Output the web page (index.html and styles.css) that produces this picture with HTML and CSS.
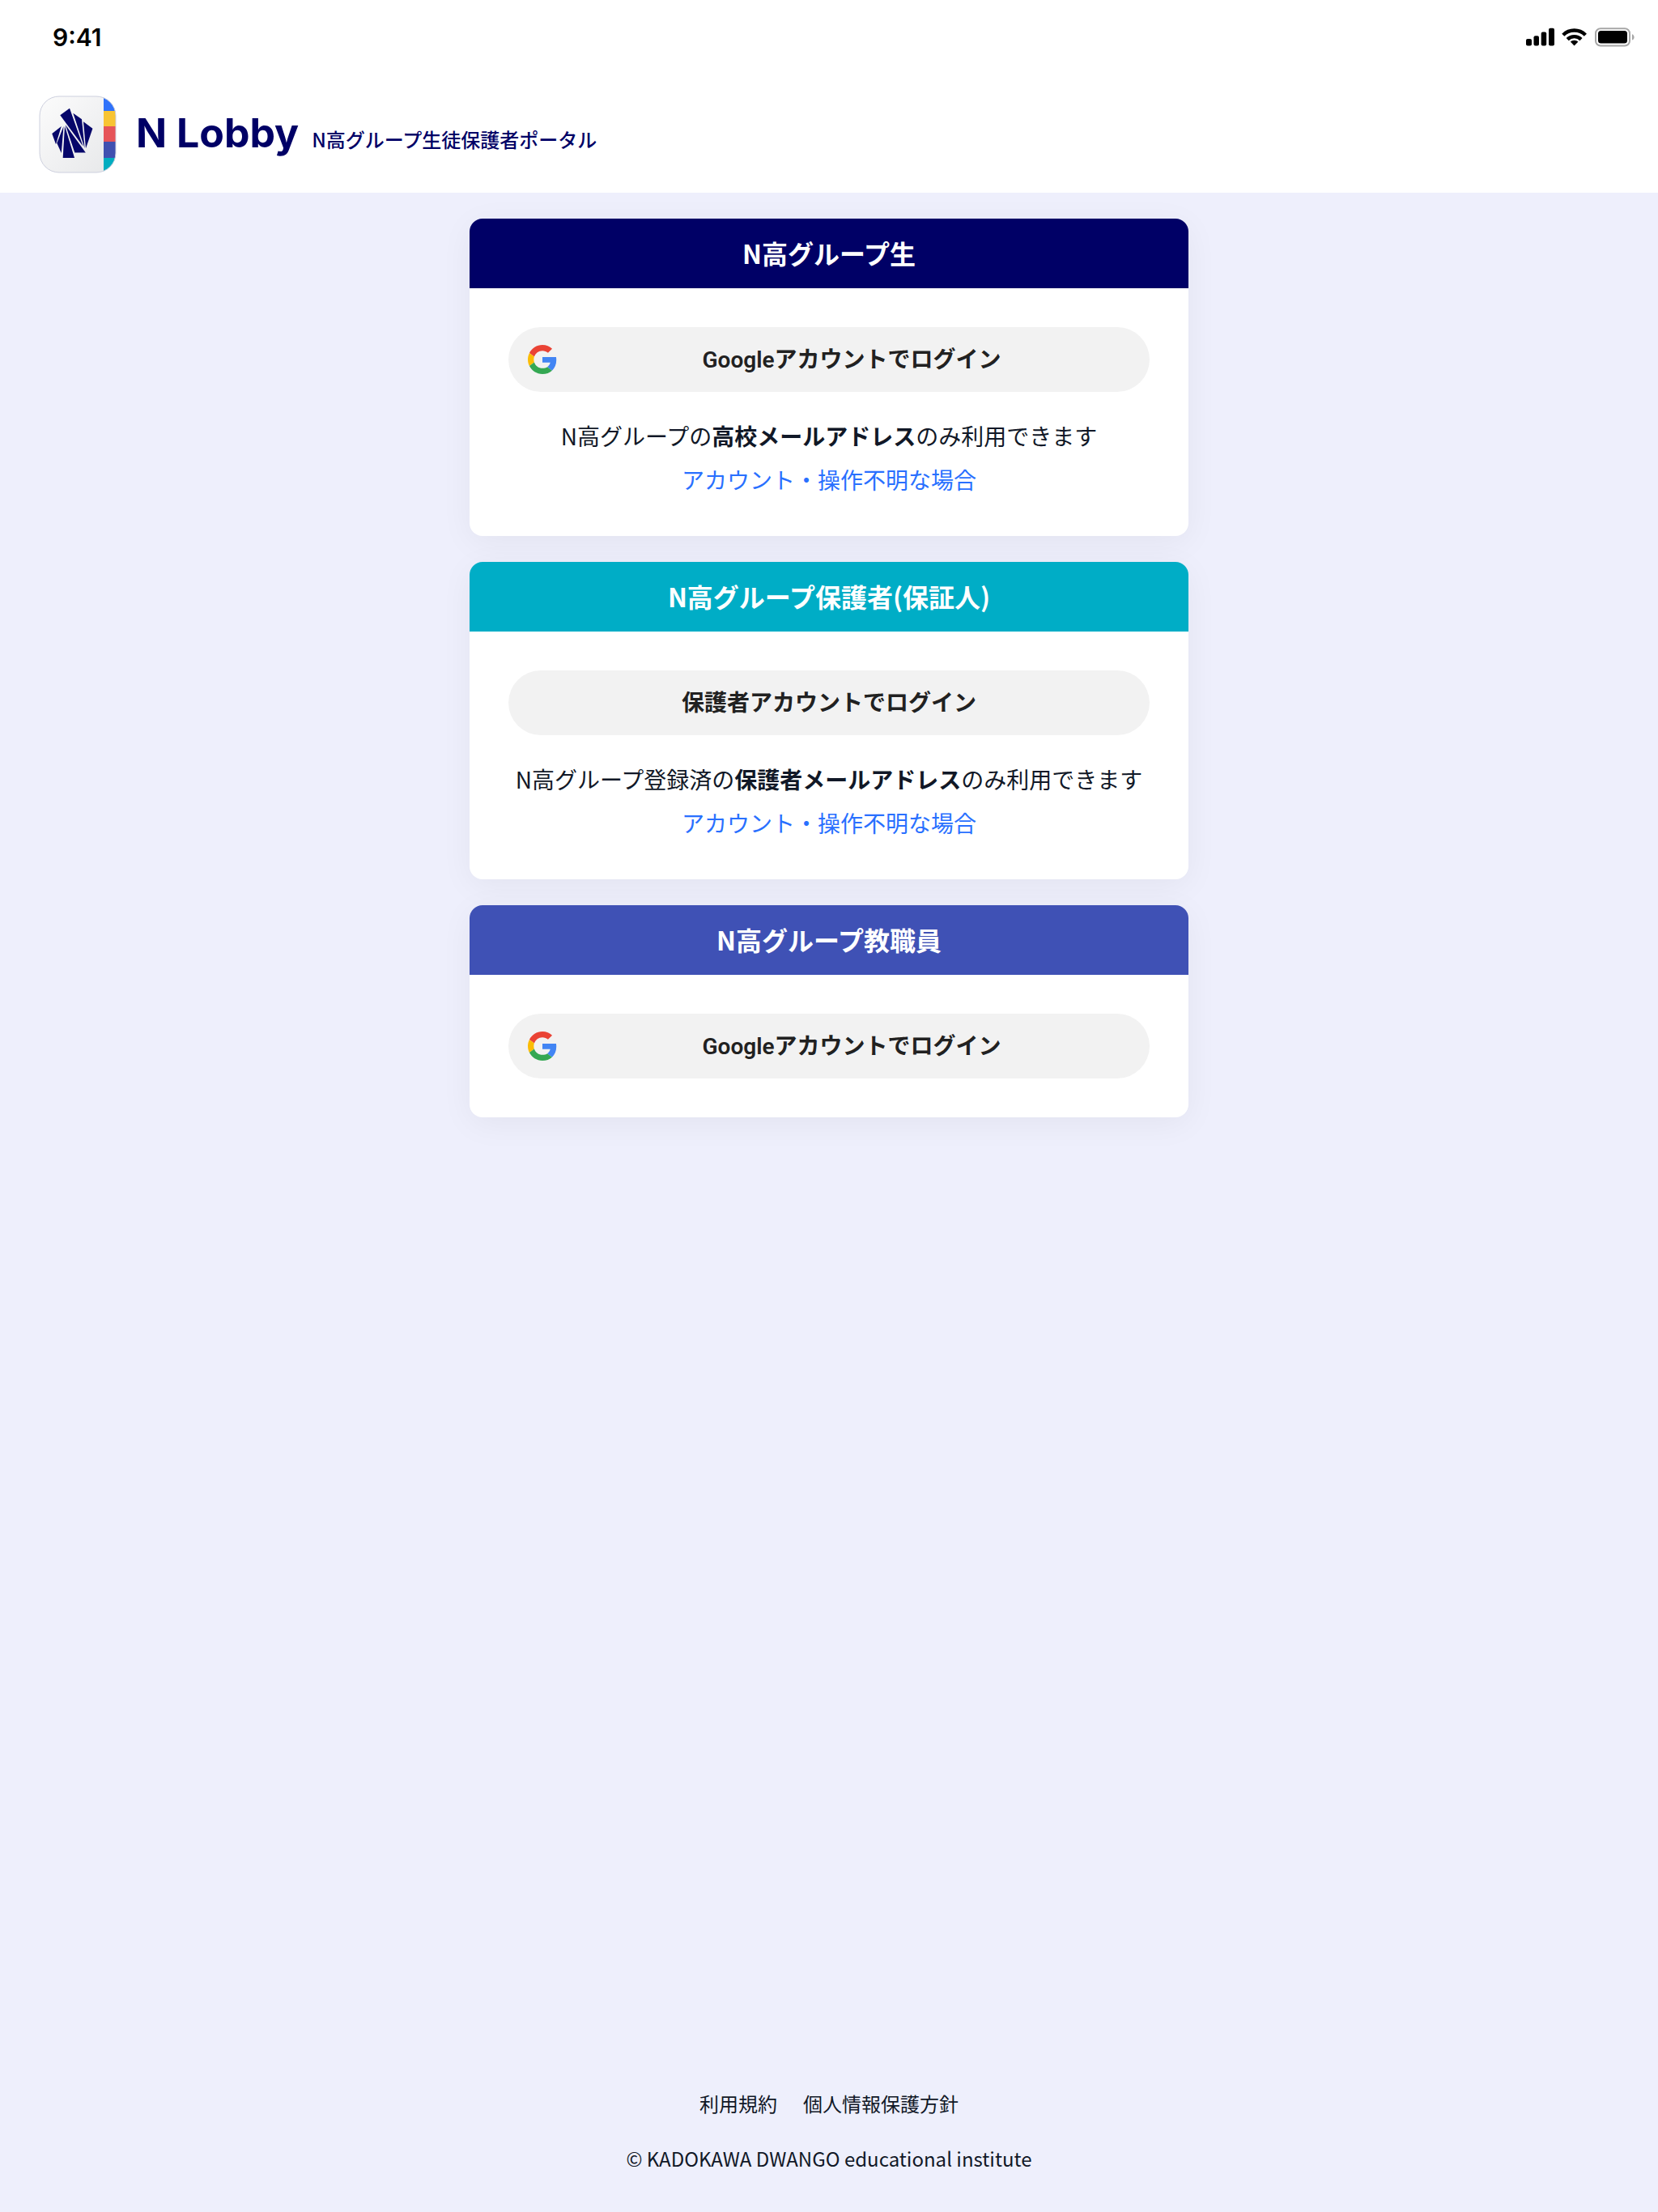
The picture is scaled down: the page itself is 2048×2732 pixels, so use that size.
FILE: index.html
```html
<!DOCTYPE html>
<html lang="ja">
  <head>
    <meta charset="UTF-8" />
    <meta name="viewport" content="width=device-width, initial-scale=1.0" />
    <title>N Lobby</title>
    <link rel="stylesheet" href="styles.css">
  </head>
  <body>
    <!-- Google ロゴ -->
    <svg class="defs" aria-hidden="true">
      <symbol id="google" viewBox="0 0 48 48">
        <path fill="#EA4335" d="M24 9.5c3.54 0 6.71 1.22 9.21 3.6l6.85-6.85C35.9 2.38 30.47 0 24 0 14.62 0 6.51 5.38 2.56 13.22l7.98 6.19C12.43 13.72 17.74 9.5 24 9.5z"/>
        <path fill="#4285F4" d="M46.98 24.55c0-1.57-.15-3.09-.38-4.55H24v9.02h12.94c-.58 2.96-2.26 5.48-4.78 7.18l7.73 6c4.51-4.18 7.09-10.36 7.09-17.65z"/>
        <path fill="#FBBC05" d="M10.53 28.59c-.48-1.45-.76-2.99-.76-4.59s.27-3.14.76-4.59l-7.98-6.19C.92 16.46 0 20.12 0 24c0 3.88.92 7.54 2.56 10.78l7.97-6.19z"/>
        <path fill="#34A853" d="M24 48c6.48 0 11.93-2.13 15.89-5.81l-7.73-6c-2.15 1.45-4.92 2.3-8.16 2.3-6.26 0-11.57-4.22-13.47-9.91l-7.98 6.19C6.51 42.62 14.62 48 24 48z"/>
      </symbol>
    </svg>

    <div class="status-bar">
      <span class="time">9:41</span>
      <svg class="status-icons" viewBox="0 0 136 26" aria-hidden="true">
        <rect x="0" y="16" width="7" height="8.5" rx="2"/>
        <rect x="9.5" y="12.3" width="6.5" height="12.2" rx="2"/>
        <rect x="18.7" y="7.5" width="6.5" height="17" rx="2"/>
        <rect x="28" y="2.7" width="7" height="21.8" rx="2"/>
        <g fill="none" stroke="#000" stroke-width="4.4">
          <path d="M45.8 11.2a19.5 19.5 0 0 1 27.6 0"/>
          <path d="M51.2 16.6a11.9 11.9 0 0 1 16.8 0"/>
        </g>
        <path d="M54.8 19.6a7 7 0 0 1 9.6 0l-4.8 5z"/>
        <rect x="86" y="3.2" width="42" height="21.3" rx="6" fill="none" stroke="#a6a6a6" stroke-width="2"/>
        <rect x="89" y="6" width="36" height="15.5" rx="3.5"/>
        <path d="M131 10.2c3.4 1 3.4 6.4 0 7.4z" fill="#a6a6a6"/>
      </svg>
    </div>

    <header class="header">
      <svg class="app-icon" viewBox="0 0 96 96" aria-hidden="true">
        <defs>
          <linearGradient id="face" x1="0" y1="0" x2="1" y2="1">
            <stop offset="0" stop-color="#fcfcfc"/>
            <stop offset="1" stop-color="#e6e7e9"/>
          </linearGradient>
          <clipPath id="round"><rect x="1" y="1" width="94" height="94" rx="24"/></clipPath>
        </defs>
        <g clip-path="url(#round)">
          <rect width="96" height="96" fill="url(#face)"/>
          <rect x="80" y="0" width="16" height="20" fill="#2f72fa"/>
          <rect x="80" y="19" width="16" height="20" fill="#f8c433"/>
          <rect x="80" y="38" width="16" height="20" fill="#e65459"/>
          <rect x="80" y="57" width="16" height="20" fill="#4050b0"/>
          <rect x="80" y="77" width="16" height="19" fill="#00adc0"/>
        </g>
        <rect x="1" y="1" width="94" height="94" rx="24" fill="none" stroke="#cdd0de"/>
        <g fill="#06066a">
          <path d="M26.3 24.3 38 15.8 54.6 62.8z"/>
          <path d="M42.3 21.7 53 29.3 56.6 65z"/>
          <path d="M55 32.3 66.4 40.7 58 65.3z"/>
          <path d="M16.3 47 27.8 38 21 60.3z"/>
          <path d="M30.5 38 22.3 58.7 27.8 71z"/>
          <path d="M32 37.5 29.7 77H44z"/>
          <path d="M32.8 36 44.3 70.4H57.8z"/>
        </g>
      </svg>
      <h1 class="brand">
        <span class="brand-name">N Lobby</span>
        <span class="brand-sub">N高グループ生徒保護者ポータル</span>
      </h1>
    </header>

    <main class="main">
      <section class="card">
        <h2 class="card-title student">N高グループ生</h2>
        <div class="card-body">
          <button type="button" class="login">
            <svg class="google"><use href="#google"/></svg>
            <span>Googleアカウントでログイン</span>
          </button>
          <p class="note">N高グループの<b>高校メールアドレス</b>のみ利用できます</p>
          <a class="help" href="#">アカウント・操作不明な場合</a>
        </div>
      </section>

      <section class="card">
        <h2 class="card-title parent">N高グループ保護者(保証人)</h2>
        <div class="card-body">
          <button type="button" class="login">
            <span>保護者アカウントでログイン</span>
          </button>
          <p class="note">N高グループ登録済の<b>保護者メールアドレス</b>のみ利用できます</p>
          <a class="help" href="#">アカウント・操作不明な場合</a>
        </div>
      </section>

      <section class="card">
        <h2 class="card-title staff">N高グループ教職員</h2>
        <div class="card-body">
          <button type="button" class="login">
            <svg class="google"><use href="#google"/></svg>
            <span>Googleアカウントでログイン</span>
          </button>
        </div>
      </section>
    </main>

    <footer class="footer">
      <nav class="footer-links">
        <a href="#">利用規約</a>
        <a href="#">個人情報保護方針</a>
      </nav>
      <small class="copyright">© KADOKAWA DWANGO educational institute</small>
    </footer>
  </body>
</html>
```

FILE: styles.css
```css
* {
  box-sizing: border-box;
}

body {
  margin: 0;
  min-height: 100vh;
  display: flex;
  flex-direction: column;
  background-color: #eeeffc;
  color: #111827;
  font-family: "Noto Sans CJK JP", sans-serif;
  font-size: 28px;
  line-height: 40px;
}

h1,
h2,
p {
  margin: 0;
}

a {
  color: inherit;
  text-decoration: none;
}

.defs {
  position: absolute;
  width: 0;
  height: 0;
}

/* ステータスバー */
.status-bar {
  display: flex;
  justify-content: space-between;
  align-items: flex-start;
  height: 94px;
  padding: 32px 27px 0 65px;
  background-color: #fff;
}

.time {
  color: #000;
  font-family: Inter, sans-serif;
  font-size: 30px;
  font-weight: 600;
  line-height: 28px;
}

.status-icons {
  width: 136px;
  height: 26px;
}

/* ヘッダー */
.header {
  display: flex;
  align-items: center;
  gap: 24px;
  padding: 24px 48px;
  background-color: #fff;
}

.app-icon {
  width: 96px;
  height: 96px;
}

.brand {
  display: flex;
  align-items: baseline;
  gap: 16px;
  padding-top: 4px;
  color: #006;
}

.brand-name {
  font-family: Inter, sans-serif;
  font-size: 50px;
  font-weight: 700;
}

.brand-sub {
  font-size: 24px;
  font-weight: 500;
}

/* ログインカード */
.main {
  flex: 1;
  display: flex;
  flex-direction: column;
  gap: 32px;
  width: 100%;
  max-width: 888px;
  margin: 0 auto;
  padding: 32px 0;
}

.card {
  overflow: hidden;
  border-radius: 16px;
  background-color: #fff;
  box-shadow: 0 8px 40px rgba(0, 0, 0, 0.05);
}

.card-title {
  padding: 18px 48px 20px;
  color: #fff;
  font-size: 32px;
  font-weight: 700;
  line-height: 48px;
  text-align: center;
}

.student {
  background-color: #006;
}

.parent {
  background-color: #00adc6;
}

.staff {
  background-color: #3f51b5;
}

.card-body {
  padding: 48px;
  text-align: center;
}

.login {
  display: flex;
  align-items: center;
  gap: 20px;
  width: 100%;
  height: 80px;
  padding: 0 24px;
  border: none;
  border-radius: 40px;
  background-color: #f2f2f2;
  color: #212121;
  font-family: Roboto, "Noto Sans CJK JP", sans-serif;
  font-size: 28px;
  font-weight: 600;
  cursor: pointer;
}

.login span {
  flex: 1;
  padding-bottom: 4px;
}

.google {
  width: 36px;
  height: 36px;
}

.note {
  margin-top: 34px;
}

.help {
  display: block;
  margin: 14px 0 2px;
  color: #2970ff;
}

/* フッター */
.footer {
  padding: 0 48px 46px;
  font-size: 24px;
  text-align: center;
}

.footer-links {
  display: flex;
  justify-content: center;
  gap: 32px;
  margin-bottom: 28px;
}

.copyright {
  display: block;
  font-size: 24px;
}
```
